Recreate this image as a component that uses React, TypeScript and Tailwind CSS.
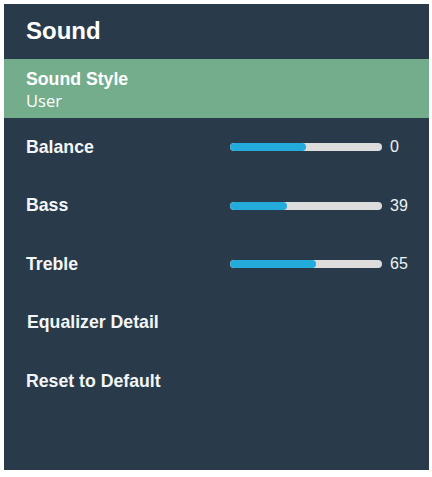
const rows = [
  { label: "Balance", value: 0, fill: 76 },
  { label: "Bass", value: 39, fill: 57 },
  { label: "Treble", value: 65, fill: 86 },
];

function Slider({ fill, value }: { fill: number; value: number }) {
  return (
    <div className="flex items-center ml-auto">
      <div className="relative w-[152px] h-[8px] rounded-full bg-[#dcdcdc] overflow-hidden">
        <div className="absolute left-0 top-0 h-full rounded-full bg-[#23abdc]" style={{ width: fill }} />
      </div>
      <span className="w-[47px] pl-[8px] text-[16px] text-[#eef2f5] leading-none">{value}</span>
    </div>
  );
}

export default function App() {
  return (
    <div className="w-[432px] h-[477px] bg-white pt-[4px] pl-[4px] font-['Liberation_Sans',Arial,sans-serif]">
      <div className="w-[425px] h-[466px] bg-[#293b4b] flex flex-col">
        <div className="h-[55px] flex items-center pl-[22px] pb-[2px]">
          <span className="text-[24px] font-bold text-white">Sound</span>
        </div>
        <div className="h-[59px] bg-[#74ad8c] flex flex-col justify-center pl-[22px] pt-[2px]">
          <span className="text-[17.7px] font-bold text-white leading-[21px]">Sound Style</span>
          <span className="text-[16.5px] text-white leading-[21px] font-['Open_Sans',sans-serif]">User</span>
        </div>
        <div className="flex flex-col">
          {rows.map((r) => (
            <div key={r.label} className="h-[58.5px] flex items-center pl-[22px]">
              <span className="text-[17.7px] font-bold text-[#f3f6f8]">{r.label}</span>
              <Slider fill={r.fill} value={r.value} />
            </div>
          ))}
          <div className="h-[58.5px] flex items-center pl-[23px]">
            <span className="text-[17.7px] font-bold text-[#f3f6f8]">Equalizer Detail</span>
          </div>
          <div className="h-[58.5px] flex items-center pl-[22px]">
            <span className="text-[17.7px] font-bold text-[#f3f6f8]">Reset to Default</span>
          </div>
        </div>
      </div>
    </div>
  );
}
